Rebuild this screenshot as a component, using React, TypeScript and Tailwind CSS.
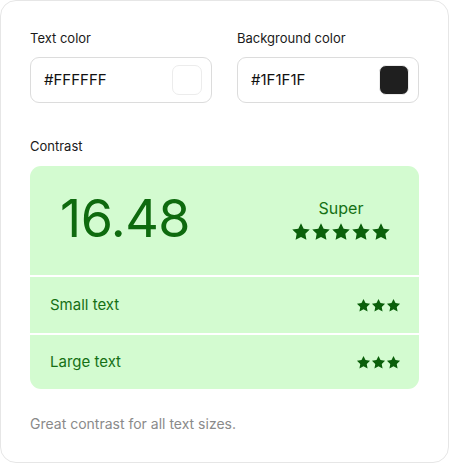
import React from 'react';

const Star = ({ size }: { size: number }) => (
  <svg width={size} height={size} viewBox="0 0 24 24" fill="currentColor">
    <path d="M12 1.5l3.2 6.6 7.3 1-5.3 5.1 1.3 7.2L12 18l-6.5 3.4 1.3-7.2-5.3-5.1 7.3-1z" />
  </svg>
);

const Stars = ({ count, size, gap }: { count: number, size: number, gap: string }) => (
  <div className={`flex ${gap} text-[#0b5f0b]`}>
    {Array.from({ length: count }).map((_, i) => (
      <Star key={i} size={size} />
    ))}
  </div>
);

const ColorInput = ({ label, value, swatch }: { label: string, value: string, swatch: string }) => (
  <div className="flex flex-col">
    <label className="text-[13px] text-[#1a1a1a] leading-4 mb-[11px]">{label}</label>
    <div className="h-[46px] flex items-center justify-between pl-[13px] pr-[9px] border border-[#dcdcdc] rounded-[9px]">
      <span className="text-[15px] text-[#111]">{value}</span>
      <span className={`w-[30px] h-[30px] rounded-[7px] border border-[#ececec] ${swatch}`}></span>
    </div>
  </div>
);

const App = () => {
  return (
    <div
      className="w-[449px] h-[463px] bg-white border border-[#e6e6e6] rounded-[16px] px-[29px] pt-[29px]"
      style={{ fontFamily: 'Inter, "Noto Sans", sans-serif' }}
    >
      <div className="grid grid-cols-2 gap-[25px]">
        <ColorInput label="Text color" value="#FFFFFF" swatch="bg-white" />
        <ColorInput label="Background color" value="#1F1F1F" swatch="bg-[#1f1f1f]" />
      </div>

      <div className="mt-[35px] text-[13px] text-[#1a1a1a] leading-4">Contrast</div>
      <div className="mt-[12px] rounded-[11px] overflow-hidden flex flex-col gap-[2px] bg-white">
        <div className="h-[109px] bg-[#d3fbd0] flex items-center justify-between pl-[30px] pr-[28px]">
          <span className="text-[52px] text-[#0e6a0e] leading-none tracking-[-0.5px] pb-[3px]">16.48</span>
          <div className="flex flex-col items-center gap-[4px] pb-[2px]">
            <span className="text-[16px] text-[#157015] leading-5">Super</span>
            <Stars count={5} size={20} gap="gap-[0px]" />
          </div>
        </div>
        <div className="h-[56px] bg-[#d3fbd0] flex items-center justify-between pl-[20px] pr-[18px]">
          <span className="text-[15px] text-[#157015]">Small text</span>
          <Stars count={3} size={15} gap="gap-[0px]" />
        </div>
        <div className="h-[54px] bg-[#d3fbd0] flex items-center justify-between pl-[20px] pr-[18px]">
          <span className="text-[15px] text-[#157015]">Large text</span>
          <Stars count={3} size={15} gap="gap-[0px]" />
        </div>
      </div>

      <p className="mt-[24px] text-[14px] text-[#8a8a8a]">Great contrast for all text sizes.</p>
    </div>
  );
};

export default App;
